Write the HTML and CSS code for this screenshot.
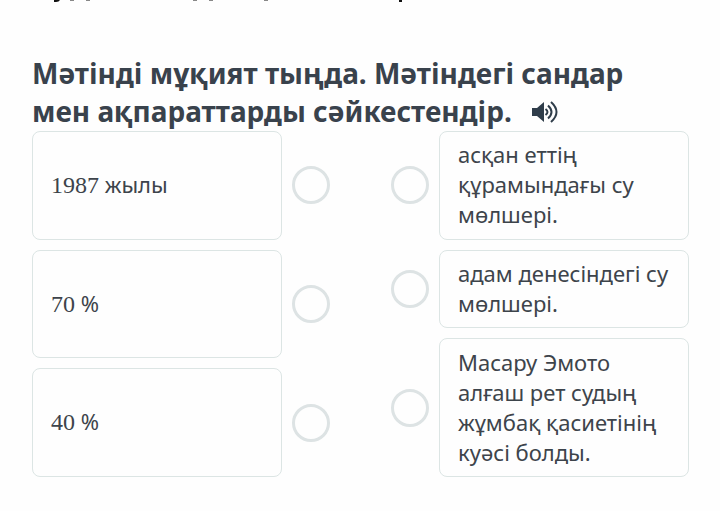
FILE: index.html
```html
<!DOCTYPE html>
<html lang="kk">
<head>
<meta charset="utf-8">
<meta name="viewport" content="width=device-width, initial-scale=1">
<title>Сәйкестендіру</title>
<link rel="stylesheet" href="styles.css">
</head>
<body>
<svg class="scrolled" width="460" height="3" viewBox="0 0 460 3" aria-hidden="true">
<path d="M54 0h6q-1 2-4 2h-2z"/>
<path d="M399 0h3v2h-3z"/>
<path class="faint" d="M70 0h4v1h-4zM86 0h4v1h-4zM193 0h4v1h-4zM209 0h4v1h-4zM264 0h4v1h-4z"/>
</svg>
<main class="task">
<h1 class="title">Мәтінді мұқият тыңда. Мәтіндегі сандар мен ақпараттарды сәйкестендір.
<button class="sound" type="button" aria-label="Тыңдау"><svg width="28" height="24" viewBox="0 0 28 24" aria-hidden="true"><path class="speaker" d="M1 8h5l7-6v20l-7-6H1z"/><path class="wave" d="M14.500 9q4 3 0 6M17 5.500q7 6.500 0 13M20 2q11 10 0 20"/></svg></button></h1>
<div class="match">
<div class="column">
<div class="row"><label class="card" for="a1"><span><span class="num">1987</span> жылы</span></label><input class="dot" type="radio" name="left" id="a1"></div>
<div class="row"><label class="card" for="a2"><span><span class="num">70</span> %</span></label><input class="dot" type="radio" name="left" id="a2"></div>
<div class="row"><label class="card" for="a3"><span><span class="num">40</span> %</span></label><input class="dot" type="radio" name="left" id="a3"></div>
</div>
<div class="column answers">
<div class="row"><input class="dot" type="radio" name="right" id="b1"><label class="card" for="b1">асқан еттің құрамындағы су мөлшері.</label></div>
<div class="row"><input class="dot" type="radio" name="right" id="b2"><label class="card" for="b2">адам денесіндегі су мөлшері.</label></div>
<div class="row"><input class="dot" type="radio" name="right" id="b3"><label class="card" for="b3">Масару Эмото алғаш рет судың жұмбақ қасиетінің куәсі болды.</label></div>
</div>
</div>
</main>
</body>
</html>
```
FILE: styles.css
```css
* {
  box-sizing: border-box;
}

body {
  margin: 0;
  background: #fefefe;
  color: #3d444b;
  font: 22px/30px "Noto Sans", sans-serif;
}

.scrolled {
  display: block;
  fill: #111;
}

.scrolled .faint {
  fill: #888;
}

.task {
  padding: 51px 31px 32px 32px;
}

.title {
  margin: 0 0 1px;
  padding-right: 24px;
  color: #39424c;
  font-size: 28px;
  line-height: 38px;
  font-weight: 700;
}

.sound {
  display: inline-flex;
  padding: 0;
  margin-left: 12px;
  border: 0;
  background: none;
  vertical-align: -2px;
  cursor: pointer;
}

.speaker {
  fill: #2f3d4a;
}

.wave {
  fill: none;
  stroke: #2f3d4a;
  stroke-width: 2;
}

.match {
  display: grid;
  grid-template-columns: 1fr 1fr;
  column-gap: 61px;
  min-height: 346px;
}

.column {
  display: flex;
  flex-direction: column;
  gap: 10px;
}

.row {
  display: flex;
  flex: 1 1 0;
  align-items: center;
  gap: 10px;
}

.answers .row {
  flex: 1 1 auto;
}

.card {
  display: flex;
  flex: 1;
  align-self: stretch;
  align-items: center;
  padding: 7px 18px 9px;
  border: 1px solid #dce5e4;
  border-radius: 8px;
  cursor: pointer;
}

.num {
  font-family: "Liberation Serif", serif;
  font-size: 24px;
}

.dot {
  appearance: none;
  flex: none;
  width: 38px;
  height: 38px;
  margin: 0;
  border: 3px solid #dde3e4;
  border-radius: 50%;
}

.dot:checked {
  background: #dde3e4;
}
```
